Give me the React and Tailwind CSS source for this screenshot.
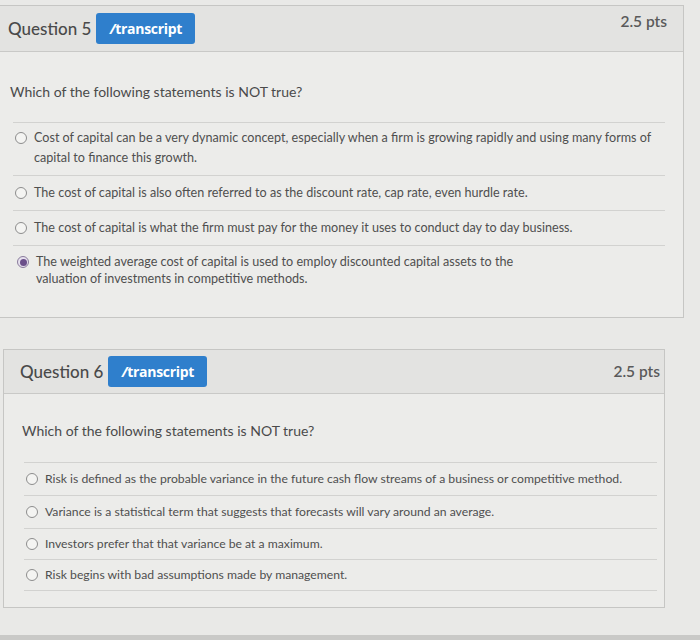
import React from 'react';

const Radio = ({ checked }) => (
  <span className="mt-[4px] flex h-[12px] w-[12px] shrink-0 items-center justify-center rounded-full border border-[#8d8d8d] bg-[#f4f4f2]">
    {checked && <span className="h-[7px] w-[7px] rounded-full bg-[#6b4f8a]" />}
  </span>
);

const Answer = ({ text, py = 'py-[7px]', size = 'text-[12.6px]' }) => (
  <div className={`flex items-start gap-[7px] border-t border-[#d2d2d0] pl-[2px] ${py}`}>
    <Radio />
    <p className={`${size} leading-[20px] text-[#4f4f4f]`}>{text}</p>
  </div>
);

const Header = ({ n, pad, h }) => (
  <div className={`flex items-center justify-between border-b border-[#c9c9c7] bg-[#e3e3e1] ${h} ${pad}`}>
    <div className="flex items-center gap-[5px]">
      <span className="text-[17px] font-medium text-[#4a4a4a]">Question {n}</span>
      <span className="flex h-[31px] w-[99px] items-center justify-center rounded-[3px] bg-[#2f7fcc] font-['Open_Sans',sans-serif] text-[14px] font-bold tracking-[-0.3px] text-white">
        <span className="italic">/</span>transcript
      </span>
    </div>
    <span className="text-[15.5px] font-semibold text-[#5a5a5a]">2.5 pts</span>
  </div>
);

export default function App() {
  return (
    <div className="flex h-[640px] w-[700px] flex-col overflow-hidden bg-[#e9e9e7] font-['Lato','Liberation_Sans',sans-serif]">
      {/* Question 5 */}
      <div className="ml-[-1px] mt-[5px] w-[685px] border border-[#c6c6c4] bg-[#ececea]">
        <Header n={5} h="h-[46px]" pad="pl-[8px] pr-[16px] [&>span]:mb-[14px]" />
        <div className="pb-[30px] pl-[10px] pr-[18px]">
          <p className="pt-[30px] text-[14px] leading-[20px] text-[#4a4a4a]">
            Which of the following statements is NOT true?
          </p>
          <div className="ml-[3px] mt-[20px] w-[652px]">
            <Answer
              py="pt-[5px] pb-[7px]"
              text="Cost of capital can be a very dynamic concept, especially when a firm is growing rapidly and using many forms of capital to finance this growth."
            />
            <Answer text="The cost of capital is also often referred to as the discount rate, cap rate, even hurdle rate." />
            <Answer text="The cost of capital is what the firm must pay for the money it uses to conduct day to day business." />
            <div className="flex items-start gap-[7px] border-t border-[#d2d2d0] pl-[4px] pt-[7px]">
              <span className="mt-[3px] flex h-[12px] w-[12px] shrink-0 items-center justify-center rounded-full border border-[#8a7c9c] bg-[#e6e0ee]">
                <span className="h-[7px] w-[7px] rounded-full bg-[#6b4f8a]" />
              </span>
              <p className="text-[12.6px] leading-[17px] text-[#4f4f4f]">
                The weighted average cost of capital is used to employ discounted capital assets to the
                <br />
                valuation of investments in competitive methods.
              </p>
            </div>
          </div>
        </div>
      </div>

      {/* Question 6 */}
      <div className="ml-[3px] mt-[31px] w-[662px] border border-[#c6c6c4] bg-[#ececea]">
        <Header n={6} h="h-[44px]" pad="pl-[16px] pr-[4px]" />
        <div className="pb-[16px] pl-[18px] pr-[8px]">
          <p className="pt-[27px] text-[14px] leading-[20px] text-[#4a4a4a]">
            Which of the following statements is NOT true?
          </p>
          <div className="ml-[2px] mt-[21px] w-[633px] border-b border-[#d2d2d0]">
            <Answer size="text-[12.2px]" py="py-[6px]" text="Risk is defined as the probable variance in the future cash flow streams of a business or competitive method." />
            <Answer size="text-[12.2px]" py="py-[6px]" text="Variance is a statistical term that suggests that forecasts will vary around an average." />
            <Answer size="text-[12.2px]" py="py-[5px]" text="Investors prefer that that variance be at a maximum." />
            <Answer size="text-[12.2px]" py="py-[5px]" text="Risk begins with bad assumptions made by management." />
          </div>
        </div>
      </div>

      <div className="mt-auto h-[5px] w-full bg-[#c9c9c7]" />
    </div>
  );
}
